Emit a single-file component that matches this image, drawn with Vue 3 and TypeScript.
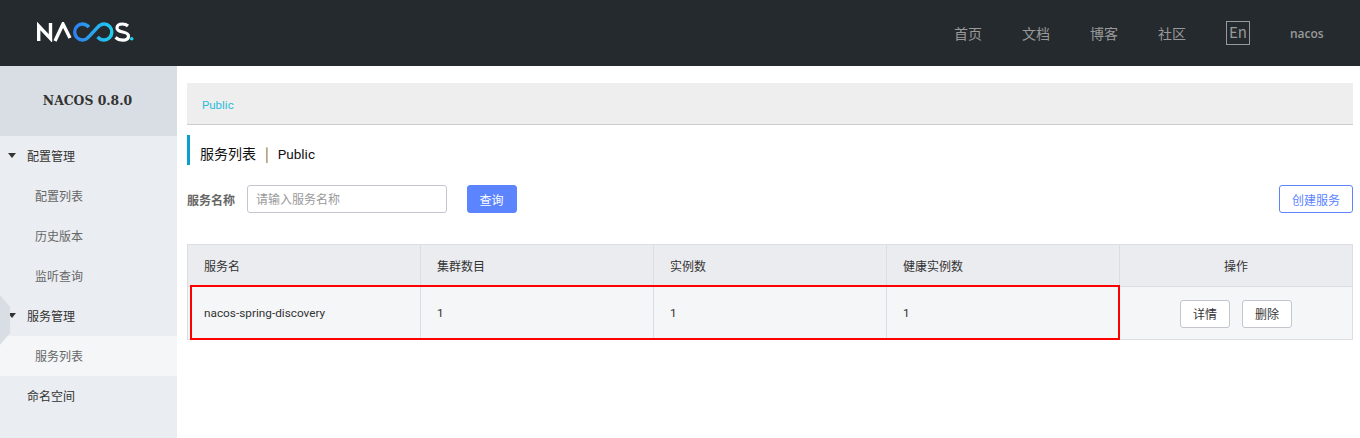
<script setup lang="ts">
interface NavItem { label: string; level: number; arrow?: boolean; active?: boolean }
const nav: NavItem[] = [
  { label: '配置管理', level: 1, arrow: true },
  { label: '配置列表', level: 2 },
  { label: '历史版本', level: 2 },
  { label: '监听查询', level: 2 },
  { label: '服务管理', level: 1, arrow: true },
  { label: '服务列表', level: 2, active: true },
  { label: '命名空间', level: 1 },
]
const links = ['首页', '文档', '博客', '社区']
const heads = ['服务名', '集群数目', '实例数', '健康实例数']
const cells = ['nacos-spring-discovery', '1', '1', '1']
</script>

<template>
  <div class="page">
    <header class="top">
      <svg class="logo" width="97" height="20" viewBox="0 0 97 20" fill="none">
        <path d="M1.700 19V4L13.500 16.500V1" stroke="#fff" stroke-width="3.400" />
        <path d="M18 19L26 2L33 16" stroke="#fff" stroke-width="3.400" />
        <defs>
          <linearGradient id="lg" x1="36" x2="76" y1="0" y2="0" gradientUnits="userSpaceOnUse">
            <stop offset="0" stop-color="#2f7dee" />
            <stop offset="1" stop-color="#1fd0f0" />
          </linearGradient>
        </defs>
        <path d="M52 5C50 3 48 2 45.500 2C41 2 37.700 5.500 37.700 10C37.700 14.500 41 18 45.500 18C48.500 18 50.500 16.500 52.500 14L60 6C62 3.500 64 2 67 2C71.500 2 74.800 5.500 74.800 10C74.800 14.500 71.500 18 67 18C64.500 18 62.500 17 60.500 15" stroke="url(#lg)" stroke-width="3.400" />
        <path d="M91 4C89.500 2.600 87.500 2 85.500 2C82.500 2 80 3.300 80 6C80 11.500 91.500 8.500 91.500 14C91.500 16.800 89 18.200 85.500 18.200C83 18.200 80.500 17.300 78.500 15.500" stroke="#fff" stroke-width="3.200" />
        <circle cx="94.700" cy="16.700" r="1.800" fill="#1fd0f0" />
      </svg>
      <nav class="top-nav">
        <a v-for="l in links" :key="l" class="top-link">{{ l }}</a>
        <span class="lang">En</span>
        <span class="user">nacos</span>
      </nav>
    </header>

    <div class="body">
      <aside class="side">
        <div class="side-title">NACOS 0.8.0</div>
        <div
          v-for="n in nav"
          :key="n.label"
          class="side-item"
          :class="[n.level === 1 ? 'lvl1' : 'lvl2', { active: n.active }]"
        >
          <i v-if="n.arrow" class="caret"></i>{{ n.label }}
        </div>
        <div class="toggle"></div>
      </aside>

      <main class="main">
        <div class="crumb">Public</div>
        <div class="heading">服务列表<span class="sep">|</span><span class="ns">Public</span></div>
        <div class="form">
          <label class="form-label">服务名称</label>
          <div class="input">请输入服务名称</div>
          <button class="btn primary">查询</button>
          <button class="btn outline">创建服务</button>
        </div>
        <div class="table">
          <div class="tr th">
            <div v-for="h in heads" :key="h" class="td">{{ h }}</div>
            <div class="td ops">操作</div>
          </div>
          <div class="tr">
            <div v-for="(c, i) in cells" :key="i" class="td latin">{{ c }}</div>
            <div class="td ops">
              <button class="btn small">详情</button>
              <button class="btn small">删除</button>
            </div>
          </div>
          <div class="mark"></div>
        </div>
      </main>
    </div>
  </div>
</template>

<style scoped>
.page {
  width: 1360px;
  height: 438px;
  overflow: hidden;
  font-family: "Noto Sans CJK SC", sans-serif;
  font-size: 12px;
  color: #333;
  background: #fff;
}
.top {
  height: 66px;
  background: #252a2f;
  display: flex;
  align-items: center;
  justify-content: space-between;
  padding: 0 37px;
}
.logo { display: block; margin-top: -2px; }
.top-nav { display: flex; align-items: center; }
.top-link {
  font-size: 14px;
  color: #999;
  width: 68px;
  margin-top: -1px;
}
.lang {
  box-sizing: border-box;
  width: 24px;
  height: 24px;
  border: 1px solid #999;
  color: #999;
  font-size: 15px;
  line-height: 20px;
  text-align: center;
  margin-top: -1px;
}
.user {
  color: #999;
  font-size: 12px;
  font-weight: 600;
  margin-left: 40px;
  width: 33px;
  font-family: "Open Sans", sans-serif;
}
.body { display: flex; height: 372px; }
.side {
  position: relative;
  width: 177px;
  flex: none;
  background: #eaedf1;
}
.side-title {
  height: 70px;
  background: #d9dee4;
  color: #333;
  font-family: "DejaVu Serif", serif;
  font-weight: 700;
  font-size: 12.400px;
  line-height: 70px;
  text-align: center;
  padding-right: 2px;
  box-sizing: border-box;
}
.side-item {
  position: relative;
  height: 40px;
  line-height: 40px;
  color: #666;
}
.lvl1 { padding-left: 27px; color: #333; }
.lvl2 { padding-left: 35px; }
.active { background: #f4f6f8; }
.caret {
  position: absolute;
  left: 8px;
  top: 17px;
  border-left: 4.500px solid transparent;
  border-right: 4.500px solid transparent;
  border-top: 5px solid #333;
}
.toggle {
  position: absolute;
  left: 0;
  top: 229px;
  width: 10px;
  height: 50px;
  background: #d9dee4;
  clip-path: polygon(0 0, 100% 24%, 100% 76%, 0 100%);
}
.main {
  flex: 1;
  padding: 17px 7px 0 10px;
  min-width: 0;
}
.crumb {
  height: 42px;
  box-sizing: border-box;
  background: #eee;
  border-bottom: 1px solid #ccc;
  padding-left: 15px;
  line-height: 45px;
  color: #2bbcd9;
  font-family: Roboto, sans-serif;
  font-size: 11.500px;
}
.heading {
  margin-top: 10px;
  height: 30px;
  line-height: 37px;
  border-left: 3px solid #09a0c9;
  padding-left: 10px;
  font-size: 14px;
  color: #111;
}
.sep { margin: 0 9px; color: #7a5a20; font-weight: 400; }
.ns { color: #111; font-family: Roboto, sans-serif; font-size: 13.500px; }
.form {
  margin-top: 20px;
  display: flex;
  align-items: center;
  height: 28px;
}
.form-label {
  width: 60px;
  font-weight: 700;
  color: #666;
}
.input {
  box-sizing: border-box;
  width: 200px;
  height: 28px;
  border: 1px solid #c4c6cf;
  border-radius: 3px;
  padding-left: 8px;
  line-height: 26px;
  color: #999;
}
.btn {
  box-sizing: border-box;
  height: 28px;
  border-radius: 3px;
  font-size: 12px;
  font-family: "Noto Sans CJK SC", sans-serif;
  padding: 0;
  background: #fff;
  border: 1px solid #c4c6cf;
  color: #333;
}
.primary {
  width: 50px;
  margin-left: 20px;
  background: #5c84ff;
  border-color: #5c84ff;
  color: #fff;
  text-indent: -1px;
}
.outline {
  width: 74px;
  margin-left: auto;
  border-color: #5c84ff;
  color: #5c84ff;
}
.table {
  position: relative;
  margin-top: 31px;
  border: 1px solid #dcdee3;
  box-sizing: border-box;
  width: 1166px;
  height: 96px;
  background: #f5f6f8;
}
.tr { display: grid; grid-template-columns: 233px 233px 233px 233px 1fr; height: 53px; }
.th { height: 41px; background: #ebecf0; border-bottom: 1px solid #dcdee3; }
.td {
  border-right: 1px solid #dcdee3;
  padding-left: 16px;
  display: flex;
  align-items: center;
  color: #333;
}
.latin { font-family: Roboto, sans-serif; font-size: 11.800px; padding-bottom: 1px; }
.td.ops { border-right: 0; padding-left: 0; justify-content: center; gap: 12px; }
.small { width: 50px; height: 28px; }
.mark {
  position: absolute;
  left: 2px;
  top: 40px;
  width: 930px;
  height: 55px;
  box-sizing: border-box;
  border: 2px solid #f00;
  pointer-events: none;
}
</style>
